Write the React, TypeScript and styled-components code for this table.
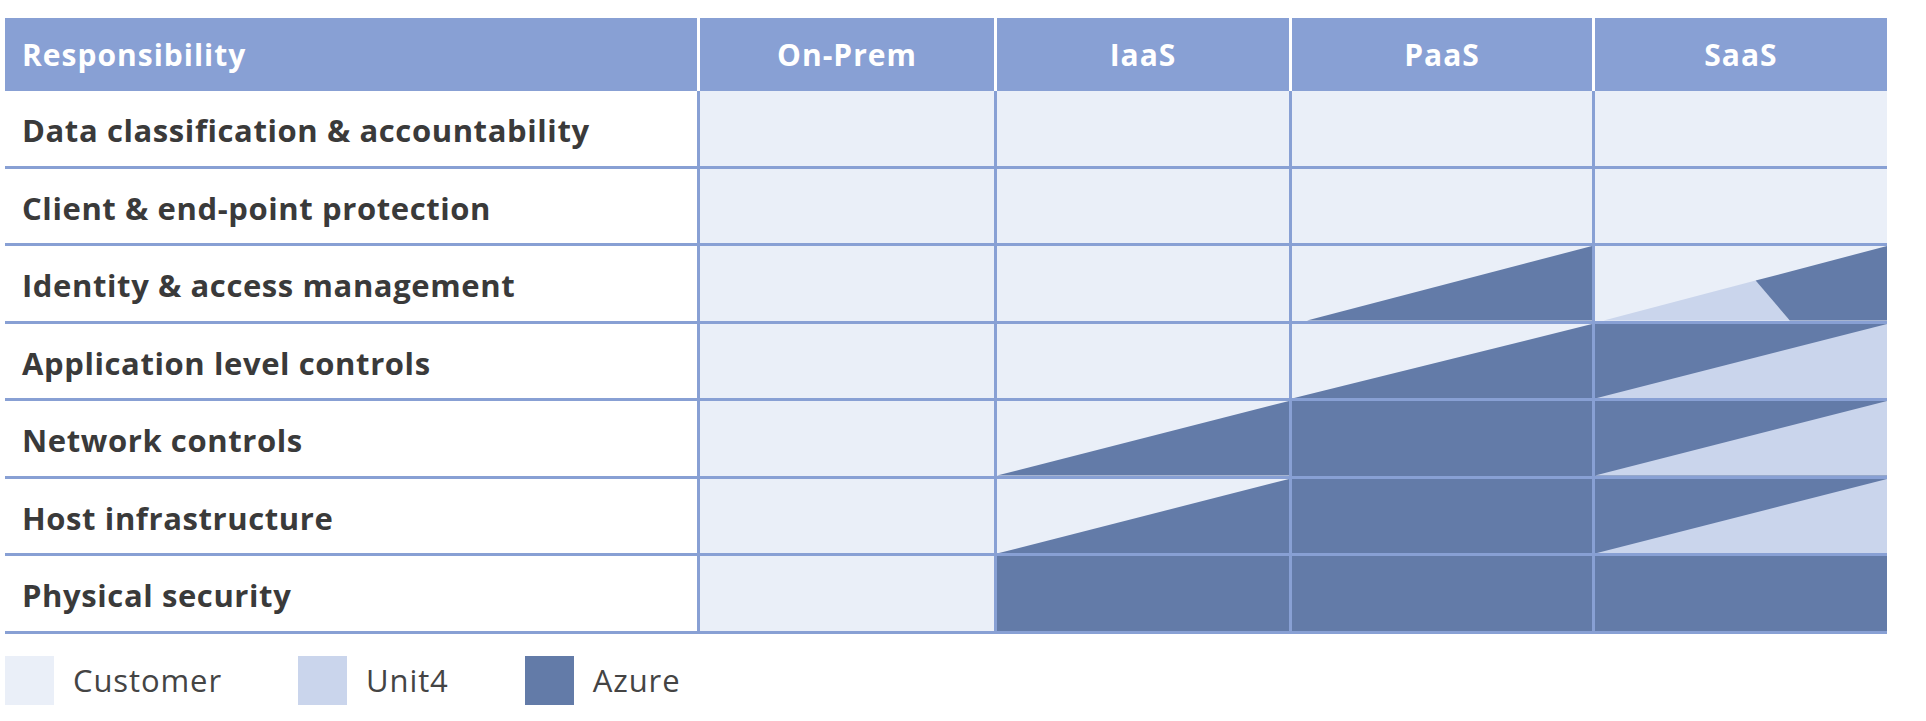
import React from 'react';
import styled, { createGlobalStyle } from 'styled-components';

const HEADER = '#88a0d4';
const LINE = '#88a0d4';
const CUSTOMER = '#eaeff8';
const UNIT4 = '#cad5ec';
const AZURE = '#637ba8';
const TEXT = '#3a3a3a';

const GlobalStyle = createGlobalStyle`
  html, body {
    margin: 0;
    padding: 0;
    background: #fff;
  }
  body {
    font-family: "Open Sans", "Noto Sans", "Liberation Sans", sans-serif;
  }
`;

type Fill = 'customer' | 'azure' | 'rise' | 'riseInset' | 'saas' | 'saasSplit';

interface RowData {
  label: string;
  cells: Fill[];
}

const columns = ['On-Prem', 'IaaS', 'PaaS', 'SaaS'];

const rows: RowData[] = [
  { label: 'Data classification & accountability', cells: ['customer', 'customer', 'customer', 'customer'] },
  { label: 'Client & end-point protection', cells: ['customer', 'customer', 'customer', 'customer'] },
  { label: 'Identity & access management', cells: ['customer', 'customer', 'riseInset', 'saasSplit'] },
  { label: 'Application level controls', cells: ['customer', 'customer', 'rise', 'saas'] },
  { label: 'Network controls', cells: ['customer', 'rise', 'azure', 'saas'] },
  { label: 'Host infrastructure', cells: ['customer', 'rise', 'azure', 'saas'] },
  { label: 'Physical security', cells: ['customer', 'azure', 'azure', 'azure'] },
];

const legend = [
  { name: 'Customer', color: CUSTOMER },
  { name: 'Unit4', color: UNIT4 },
  { name: 'Azure', color: AZURE },
];

// background colour per fill + polygons drawn over it (viewBox 0 0 100 100)
const shapes: Record<Fill, { bg: string; polys: { points: string; color: string }[] }> = {
  customer: { bg: CUSTOMER, polys: [] },
  azure: { bg: AZURE, polys: [] },
  rise: { bg: CUSTOMER, polys: [{ points: '0,100 100,0 100,100', color: AZURE }] },
  riseInset: { bg: CUSTOMER, polys: [{ points: '5,100 100,0 100,100', color: AZURE }] },
  saas: { bg: AZURE, polys: [{ points: '0,100 100,0 100,100', color: UNIT4 }] },
  saasSplit: {
    bg: CUSTOMER,
    polys: [
      { points: '3,100 55,46.4 66.7,100', color: UNIT4 },
      { points: '55,46.4 100,0 100,100 66.7,100', color: AZURE },
    ],
  },
};

export default function App() {
  return (
    <React.Fragment>
      <GlobalStyle />
      <Page>
        <Table>
          <HeadCell $first>Responsibility</HeadCell>
          {columns.map((c) => (
            <HeadCell key={c}>{c}</HeadCell>
          ))}
          {rows.map((r) => (
            <React.Fragment key={r.label}>
              <LabelCell>{r.label}</LabelCell>
              {r.cells.map((f, i) => (
                <ShareCell key={i} $bg={shapes[f].bg}>
                  {shapes[f].polys.length > 0 && (
                    <svg viewBox="0 0 100 100" preserveAspectRatio="none">
                      {shapes[f].polys.map((p, j) => (
                        <polygon key={j} points={p.points} fill={p.color} />
                      ))}
                    </svg>
                  )}
                </ShareCell>
              ))}
            </React.Fragment>
          ))}
        </Table>
        <Legend>
          {legend.map((l) => (
            <LegendItem key={l.name}>
              <Swatch $color={l.color} />
              {l.name}
            </LegendItem>
          ))}
        </Legend>
      </Page>
    </React.Fragment>
  );
}

const Page = styled.div`
  padding: 18px 0 0 5px;
`;

const Table = styled.div`
  display: grid;
  grid-template-columns: 692px 297px 295px 303px 295px;
  grid-template-rows: 73px repeat(7, 77.5px);
`;

const HeadCell = styled.div<{ $first?: boolean }>`
  box-sizing: border-box;
  background: ${HEADER};
  color: #fff;
  font-weight: 700;
  font-size: 30px;
  letter-spacing: 1px;
  display: flex;
  align-items: center;
  justify-content: ${(p) => (p.$first ? 'flex-start' : 'center')};
  padding-left: ${(p) => (p.$first ? '17px' : '0')};
  border-left: ${(p) => (p.$first ? 'none' : '3px solid #fff')};
`;

const LabelCell = styled.div`
  box-sizing: border-box;
  background: #fff;
  color: ${TEXT};
  font-weight: 700;
  font-size: 31px;
  letter-spacing: 0.6px;
  display: flex;
  align-items: center;
  padding: 4px 0 0 17px;
  border-bottom: 3px solid ${LINE};
`;

const ShareCell = styled.div<{ $bg: string }>`
  box-sizing: border-box;
  background: ${(p) => p.$bg};
  border-left: 3px solid ${LINE};
  border-bottom: 3px solid ${LINE};
  > svg {
    display: block;
    width: 100%;
    height: 100%;
  }
`;

const Legend = styled.div`
  display: flex;
  align-items: center;
  gap: 76px;
  margin-top: 22px;
`;

const LegendItem = styled.div`
  display: flex;
  align-items: center;
  gap: 19px;
  font-size: 31px;
  letter-spacing: 0.9px;
  color: #444;
`;

const Swatch = styled.div<{ $color: string }>`
  width: 49px;
  height: 49px;
  background: ${(p) => p.$color};
`;
